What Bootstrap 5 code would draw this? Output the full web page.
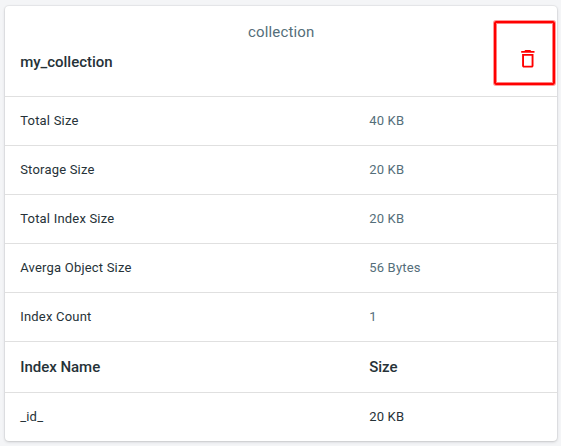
<!DOCTYPE html>
<html lang="en">
<head>
<meta charset="utf-8">
<meta name="viewport" content="width=device-width, initial-scale=1">
<title>my_collection</title>
<link href="https://cdn.jsdelivr.net/npm/bootstrap@5.3.0/dist/css/bootstrap.min.css" rel="stylesheet">
<style>
body{background:#f4f5f7;font-family:Roboto,sans-serif;font-size:13px;letter-spacing:.2px;color:#263238;padding:6px 4px 4px 5px;height:446px;overflow:hidden}
.stats-card{width:552px;height:435px;border-radius:4px;box-shadow:0 0 0 1px rgba(63,63,68,.05),0 1px 3px rgba(63,63,68,.22);overflow:hidden}
.stats-head{height:90px}
.type-label{font-size:15px;line-height:20px;color:#546e7a;letter-spacing:.15px;padding:16px 0 0 .4px}
.coll-name{font-size:15px;line-height:20px;padding:10px 0 0 15.2px;font-weight:500;letter-spacing:-.02px}
.delete-btn{top:15px;right:2px;width:61px;height:64px;border:2px solid #f00;border-radius:2px;color:#f00;padding:12px 0 0 6px;box-shadow:0 0 0 1px rgba(255,0,0,.4),inset 0 0 0 1px rgba(255,0,0,.5)}
.stat-row{height:49px;border-top:1px solid #e0e0e0;padding-left:15.2px}
.stat-title{height:51px;font-size:15px;font-weight:500;letter-spacing:-.02px}
.stat-key{width:349px}
.stat-val{color:#546e7a}
</style>
</head>
<body>
<main class="stats-card bg-white">
<header class="stats-head position-relative">
<div class="type-label text-center">collection</div>
<h1 class="coll-name m-0">my_collection</h1>
<button class="delete-btn position-absolute bg-transparent d-flex align-items-center justify-content-center" type="button" aria-label="Delete"><svg width="24" height="24" viewBox="0 0 24 24" fill="currentColor"><path d="M6.100 18.800c0 1 .8 1.800 1.800 1.800h7.800c1 0 1.800-.8 1.800-1.800V7H6.100v11.800zM8 8.800h7.600v10H8v-10zm7.300-4.800-1-1H9.300l-1 1H5.200v1.800h13.300V4z"/></svg></button>
</header>
<div class="stat-row d-flex align-items-center"><div class="stat-key">Total Size</div><div class="stat-val">40 KB</div></div>
<div class="stat-row d-flex align-items-center"><div class="stat-key">Storage Size</div><div class="stat-val">20 KB</div></div>
<div class="stat-row d-flex align-items-center"><div class="stat-key">Total Index Size</div><div class="stat-val">20 KB</div></div>
<div class="stat-row d-flex align-items-center"><div class="stat-key">Averga Object Size</div><div class="stat-val">56 Bytes</div></div>
<div class="stat-row d-flex align-items-center"><div class="stat-key">Index Count</div><div class="stat-val">1</div></div>
<div class="stat-row stat-title d-flex align-items-center"><div class="stat-key">Index Name</div><div>Size</div></div>
<div class="stat-row d-flex align-items-center"><div class="stat-key">_id_</div><div>20 KB</div></div>
</main>
<script src="https://cdn.jsdelivr.net/npm/bootstrap@5.3.0/dist/js/bootstrap.bundle.min.js"></script>
</body>
</html>
